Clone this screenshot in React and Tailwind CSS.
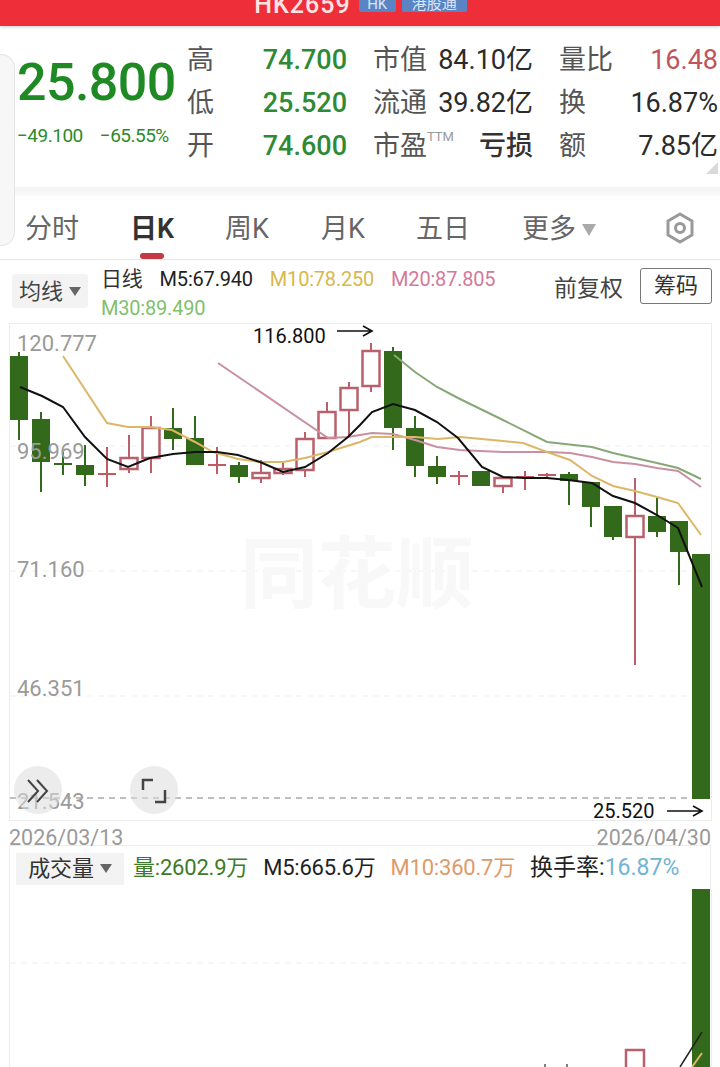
const GREEN = '#33691a'
const RED = '#b9606c'

// [x, wickTop, bodyTop, bodyBottom, wickBottom, kind]  kind: g = filled green, r = hollow red, d = doji red, t = doji green
const CANDLES = [
  [19, 352, 356, 420, 440, 'g'],
  [41, 412, 419, 462, 492, 'g'],
  [63, 452, 463, 464, 475, 't'],
  [85, 445, 465, 475, 486, 'g'],
  [107, 447, 473, 475, 487, 'd'],
  [129, 435, 458, 469, 473, 'r'],
  [151, 416, 428, 458, 473, 'r'],
  [173, 408, 428, 439, 450, 'g'],
  [195, 416, 438, 465, 465, 'g'],
  [217, 447, 464, 465, 474, 'd'],
  [239, 462, 465, 477, 483, 'g'],
  [261, 460, 473, 478, 483, 'r'],
  [283, 462, 469, 473, 475, 'r'],
  [305, 432, 439, 470, 477, 'r'],
  [327, 402, 412, 438, 438, 'r'],
  [349, 382, 388, 410, 437, 'r'],
  [371, 343, 351, 386, 392, 'r'],
  [393, 347, 351, 428, 450, 'g'],
  [415, 416, 428, 466, 477, 'g'],
  [437, 456, 466, 477, 484, 'g'],
  [459, 471, 475, 476, 485, 'd'],
  [481, 471, 471, 486, 486, 'g'],
  [503, 478, 478, 486, 493, 'r'],
  [525, 471, 476, 477, 490, 'd'],
  [547, 473, 474, 476, 477, 'd'],
  [569, 472, 474, 481, 505, 'g'],
  [591, 482, 482, 507, 527, 'g'],
  [613, 506, 506, 537, 540, 'g'],
  [635, 478, 516, 537, 665, 'r'],
  [657, 498, 516, 532, 537, 'g'],
  [679, 521, 521, 552, 585, 'g'],
  [701, 554, 554, 799, 799, 'g'],
]

const MA5 = '20,387 42,396 63,407 85,437 107,459 128,467 150,458 173,454 195,452 217,452 238,455 260,462 283,472 305,467 328,453 348,437 360,425 372,412 393,404 415,410 437,422 458,438 482,467 503,477 525,478 547,478 568,480 592,483 613,496 635,503 657,515 678,528 702,587'
const MA10 = '63,356 107,423 128,427 150,427 172,430 195,442 213,452 238,459 260,462 283,462 305,458 328,452 360,442 372,437 393,437 415,437 438,439 460,437 503,441 523,443 547,452 570,460 592,476 613,486 635,491 657,497 678,503 701,535'
const MA20 = '218,363 328,438 348,437 360,435 372,433 393,434 415,440 437,447 460,450 480,451 503,452 547,452 570,453 592,457 613,462 635,464 657,468 678,471 701,487'
const MA30 = '394,355 415,372 437,387 458,398 503,420 547,442 592,447 613,453 657,463 678,468 701,479'

const QUOTE = [
  ['高', '74.700', '市值', '84.10亿', '量比', '16.48'],
  ['低', '25.520', '流通', '39.82亿', '换', '16.87%'],
  ['开', '74.600', '市盈', '亏损', '额', '7.85亿'],
]

function Candle({ c }) {
  const [x, wt, bt, bb, wb, kind] = c
  if (kind === 'g' || kind === 't') {
    return (
      <g>
        <line x1={x} x2={x} y1={wt} y2={wb} stroke={GREEN} strokeWidth="2" />
        <rect x={x - 9} y={bt} width="18" height={Math.max(bb - bt, 2)} fill={GREEN} />
      </g>
    )
  }
  if (kind === 'd') {
    return (
      <g>
        <line x1={x} x2={x} y1={wt} y2={wb} stroke="#c25a64" strokeWidth="2" />
        <rect x={x - 9} y={bt} width="18" height={Math.max(bb - bt, 2)} fill="#c25a64" />
      </g>
    )
  }
  return (
    <g>
      <line x1={x} x2={x} y1={wt} y2={bt} stroke={RED} strokeWidth="2" />
      <line x1={x} x2={x} y1={bb} y2={wb} stroke={RED} strokeWidth="2" />
      <rect x={x - 8.5} y={bt} width="17" height={bb - bt} fill="#fff" stroke={RED} strokeWidth="2.5" />
    </g>
  )
}

function Arrow({ x1, x2, y }) {
  return (
    <path d={`M${x1} ${y}H${x2}M${x2 - 9} ${y - 5}L${x2} ${y}L${x2 - 9} ${y + 5}`} fill="none" stroke="#111" strokeWidth="1.6" />
  )
}

function Caret({ className }) {
  return <span className={`inline-block w-0 h-0 border-x-[6px] border-x-transparent border-t-[9px] ${className}`} />
}

function KChart() {
  return (
    <svg viewBox="0 323 720 498" className="block w-[720px] h-[498px]">
      <rect x="9.5" y="323.5" width="702" height="497" fill="#fff" stroke="#ececec" />
      {[446, 571, 696].map((y) => (
        <line key={y} x1="10" x2="711" y1={y} y2={y} stroke="#efefef" strokeDasharray="6 5" />
      ))}
      <text x="240" y="602" fontSize="78" fontWeight="700" fill="#f8f8f8">同花顺</text>
      {CANDLES.map((c) => <Candle key={c[0]} c={c} />)}
      <polyline points={MA30} fill="none" stroke="#86a877" strokeWidth="2" />
      <polyline points={MA20} fill="none" stroke="#c9909f" strokeWidth="2" />
      <polyline points={MA10} fill="none" stroke="#dcb768" strokeWidth="2" />
      <polyline points={MA5} fill="none" stroke="#111" strokeWidth="2" />
      <g fontSize="22" fill="#9a9a9a">
        <text x="17" y="351">120.777</text>
        <text x="17" y="459">95.969</text>
        <text x="17" y="577">71.160</text>
        <text x="17" y="696">46.351</text>
        <text x="17" y="809">21.543</text>
      </g>
      <line x1="10" x2="692" y1="798" y2="798" stroke="#aaa" strokeWidth="1.5" strokeDasharray="6 5" />
      <text x="253" y="343" fontSize="20" fill="#111">116.800</text>
      <Arrow x1={337} x2={372} y={331} />
      <text x="593" y="818" fontSize="20" fill="#111">25.520</text>
      <Arrow x1={667} x2={702} y={811} />
      <circle cx="38" cy="790" r="24" fill="#ddd" fillOpacity="0.55" />
      <circle cx="154" cy="790" r="24" fill="#ddd" fillOpacity="0.55" />
      <path d="M28 780L38 791L28 802M37 780L47 791L37 802" fill="none" stroke="#444" strokeWidth="2" />
      <path d="M143 790V780H153M165 790V802H155" fill="none" stroke="#444" strokeWidth="2.5" />
    </svg>
  )
}

function VolumeChart() {
  return (
    <svg viewBox="0 889 720 178" className="block w-[720px] h-[178px]">
      <line x1="9.5" x2="9.5" y1="889" y2="1067" stroke="#ececec" />
      <line x1="711.5" x2="711.5" y1="889" y2="1067" stroke="#ececec" />
      <line x1="10" x2="692" y1="963" y2="963" stroke="#efefef" strokeDasharray="6 5" />
      <rect x="692" y="889" width="18" height="178" fill={GREEN} />
      <rect x="626" y="1050" width="18" height="20" fill="#fff" stroke={RED} strokeWidth="2.5" />
      <line x1="692" x2="702" y1="1067" y2="1053" stroke="#dcb768" strokeWidth="2" />
      <line x1="680" x2="702" y1="1067" y2="1032" stroke="#222" strokeWidth="1.5" />
      <line x1="545" x2="545" y1="1064" y2="1067" stroke="#555" strokeWidth="1.5" />
      <line x1="567" x2="567" y1="1064" y2="1067" stroke="#555" strokeWidth="1.5" />
    </svg>
  )
}

export default function App() {
  return (
    <div className="relative w-[720px] h-[1067px] overflow-hidden bg-white text-[#333] [font-family:Roboto,'Noto_Sans_CJK_SC',sans-serif]">
      {/* Red title bar, cut off at the top */}
      <header className="h-[26px] bg-[#ee2f3a] shadow-[0_1px_3px_rgba(0,0,0,0.2)] flex justify-center items-end gap-[8px] overflow-hidden pl-[1px]">
        <span className="text-[25px] leading-[25px] mb-[9px] font-medium text-[#fde3e3] tracking-[1px]">HK2659</span>
        <div className="flex gap-[6px] self-start -mt-[6px]">
          <span className="w-[37px] h-[18px] rounded-[2px] bg-[#5a84c4] text-[#dbe6f7] text-[15px] leading-[20px] text-center">HK</span>
          <span className="w-[65px] h-[18px] rounded-[2px] bg-[#5a84c4] text-[#dbe6f7] text-[15px] leading-[20px] text-center">港股通</span>
        </div>
      </header>

      {/* Side pull tab */}
      <div className="absolute left-0 top-[54px] w-[15px] h-[192px] rounded-r-[14px] bg-[#f7f7f7] border border-l-0 border-[#e4e4e4]" />

      {/* Quote */}
      <section className="relative h-[161px] flex pt-[13px] pl-[17px]">
        <div className="w-[170px]">
          <div className="text-[52px] leading-[60px] mt-[14px] font-medium text-[#1f8a24] tracking-[-0.6px]">25.800</div>
          <div className="flex gap-[17px] mt-[11px] text-[19px] leading-[24px] text-[#2c8a2c] tracking-[-0.5px]">
            <span>−49.100</span>
            <span>−65.55%</span>
          </div>
        </div>
        <div className="grid grid-cols-[160px_160px_159px] gap-x-[26px] auto-rows-[43px] h-fit">
          {QUOTE.map((row) => (
            <div key={row[0]} className="contents">
              <div className="flex justify-between items-center text-[27px]">
                <span className="text-[#555]">{row[0]}</span>
                <span className="text-[#2f8a35] font-medium">{row[1]}</span>
              </div>
              <div className="flex justify-between items-center text-[27px]">
                <span className="text-[#555] flex items-start">
                  {row[2]}
                  {row[2] === '市盈' && <span className="text-[13px] leading-[22px] text-[#999]">TTM</span>}
                </span>
                <span className={row[3] === '亏损' ? 'text-[#333] font-medium' : 'text-[#2b2b2b]'}>{row[3]}</span>
              </div>
              <div className="flex justify-between items-center text-[27px]">
                <span className="text-[#555]">{row[4]}</span>
                <span className={row[4] === '量比' ? 'text-[#c2525c]' : 'text-[#2b2b2b]'}>{row[5]}</span>
              </div>
            </div>
          ))}
        </div>
        <div className="absolute right-[2px] bottom-[13px] w-0 h-0 border-l-[12px] border-l-transparent border-b-[12px] border-b-[#d9d9d9]" />
      </section>

      <div className="h-[9px] bg-gradient-to-b from-[#f3f3f3] to-[#fafafa]" />

      {/* Period tabs */}
      <nav className="relative h-[64px] border-b border-[#e6e6e6] flex items-center pl-[25px] pt-[4px] text-[27px] text-[#666]">
        <span className="w-[105px]">分时</span>
        <span className="w-[95px] font-semibold text-[#333]">日K</span>
        <span className="w-[96px]">周K</span>
        <span className="w-[95px]">月K</span>
        <span className="w-[106px]">五日</span>
        <span className="flex items-center gap-[6px]">
          更多
          <span className="inline-block w-0 h-0 border-x-[7px] border-x-transparent border-t-[12px] border-t-[#aaa]" />
        </span>
        <svg viewBox="0 0 32 32" className="absolute left-[664px] top-[16px] w-[32px] h-[32px]" fill="none" stroke="#999" strokeWidth="3">
          <path d="M16 2L28 9V23L16 30L4 23V9Z" strokeLinejoin="round" />
          <circle cx="16" cy="16" r="4.5" />
        </svg>
        <div className="absolute left-[140px] bottom-0 w-[24px] h-[6px] rounded-[3px] bg-[#c23b44]" />
      </nav>

      {/* Moving average legend */}
      <div className="h-[63px] flex pl-[12px] pr-[8px]">
        <div className="w-[76px] h-[34px] mt-[14px] bg-[#f3f3f3] rounded-[3px] flex items-center justify-center gap-[6px] text-[22px] text-[#444]">
          均线
          <Caret className="border-t-[#666]" />
        </div>
        <div className="w-[440px] ml-[13px] pt-[6px] text-[20px] leading-[27px] flex flex-wrap gap-x-[17px] tracking-[-0.2px]">
          <span className="text-[#333] text-[21px]">日线</span>
          <span className="text-[#222]">M5:67.940</span>
          <span className="text-[#d8b84e]">M10:78.250</span>
          <span className="text-[#d3799a]">M20:87.805</span>
          <span className="text-[#7fbf6e]">M30:89.490</span>
        </div>
        <div className="text-[23px] text-[#444] ml-auto mt-[14px] leading-[30px]">前复权</div>
        <div className="w-[72px] h-[36px] ml-[17px] mt-[8px] border border-[#777] rounded-[3px] text-[22px] leading-[34px] text-center text-[#333]">筹码</div>
      </div>

      <KChart />

      {/* Date range */}
      <div className="h-[25px] mx-[9px] border-b border-[#ececec] flex justify-between pt-[9px] text-[21.5px] leading-[16px] text-[#9a9a9a]">
        <span>2026/03/13</span>
        <span>2026/04/30</span>
      </div>

      {/* Volume legend */}
      <div className="h-[43px] mx-[9px] border-x border-[#ececec] flex items-center pl-[6px] pt-[2px] text-[22px] tracking-[-0.2px]">
        <div className="w-[108px] h-[32px] bg-[#f3f3f3] flex items-center justify-center gap-[6px] text-[#333]">
          成交量
          <Caret className="border-t-[#666]" />
        </div>
        <div className="flex gap-[15px] ml-[9px]">
          <span className="text-[#3d7a2a]">量:2602.9万</span>
          <span className="text-[#222]">M5:665.6万</span>
          <span className="text-[#dd9a6b]">M10:360.7万</span>
          <span className="text-[#222] text-[23px] tracking-normal">换手率:<span className="text-[#6fb4d4]">16.87%</span></span>
        </div>
      </div>

      <VolumeChart />
    </div>
  )
}
